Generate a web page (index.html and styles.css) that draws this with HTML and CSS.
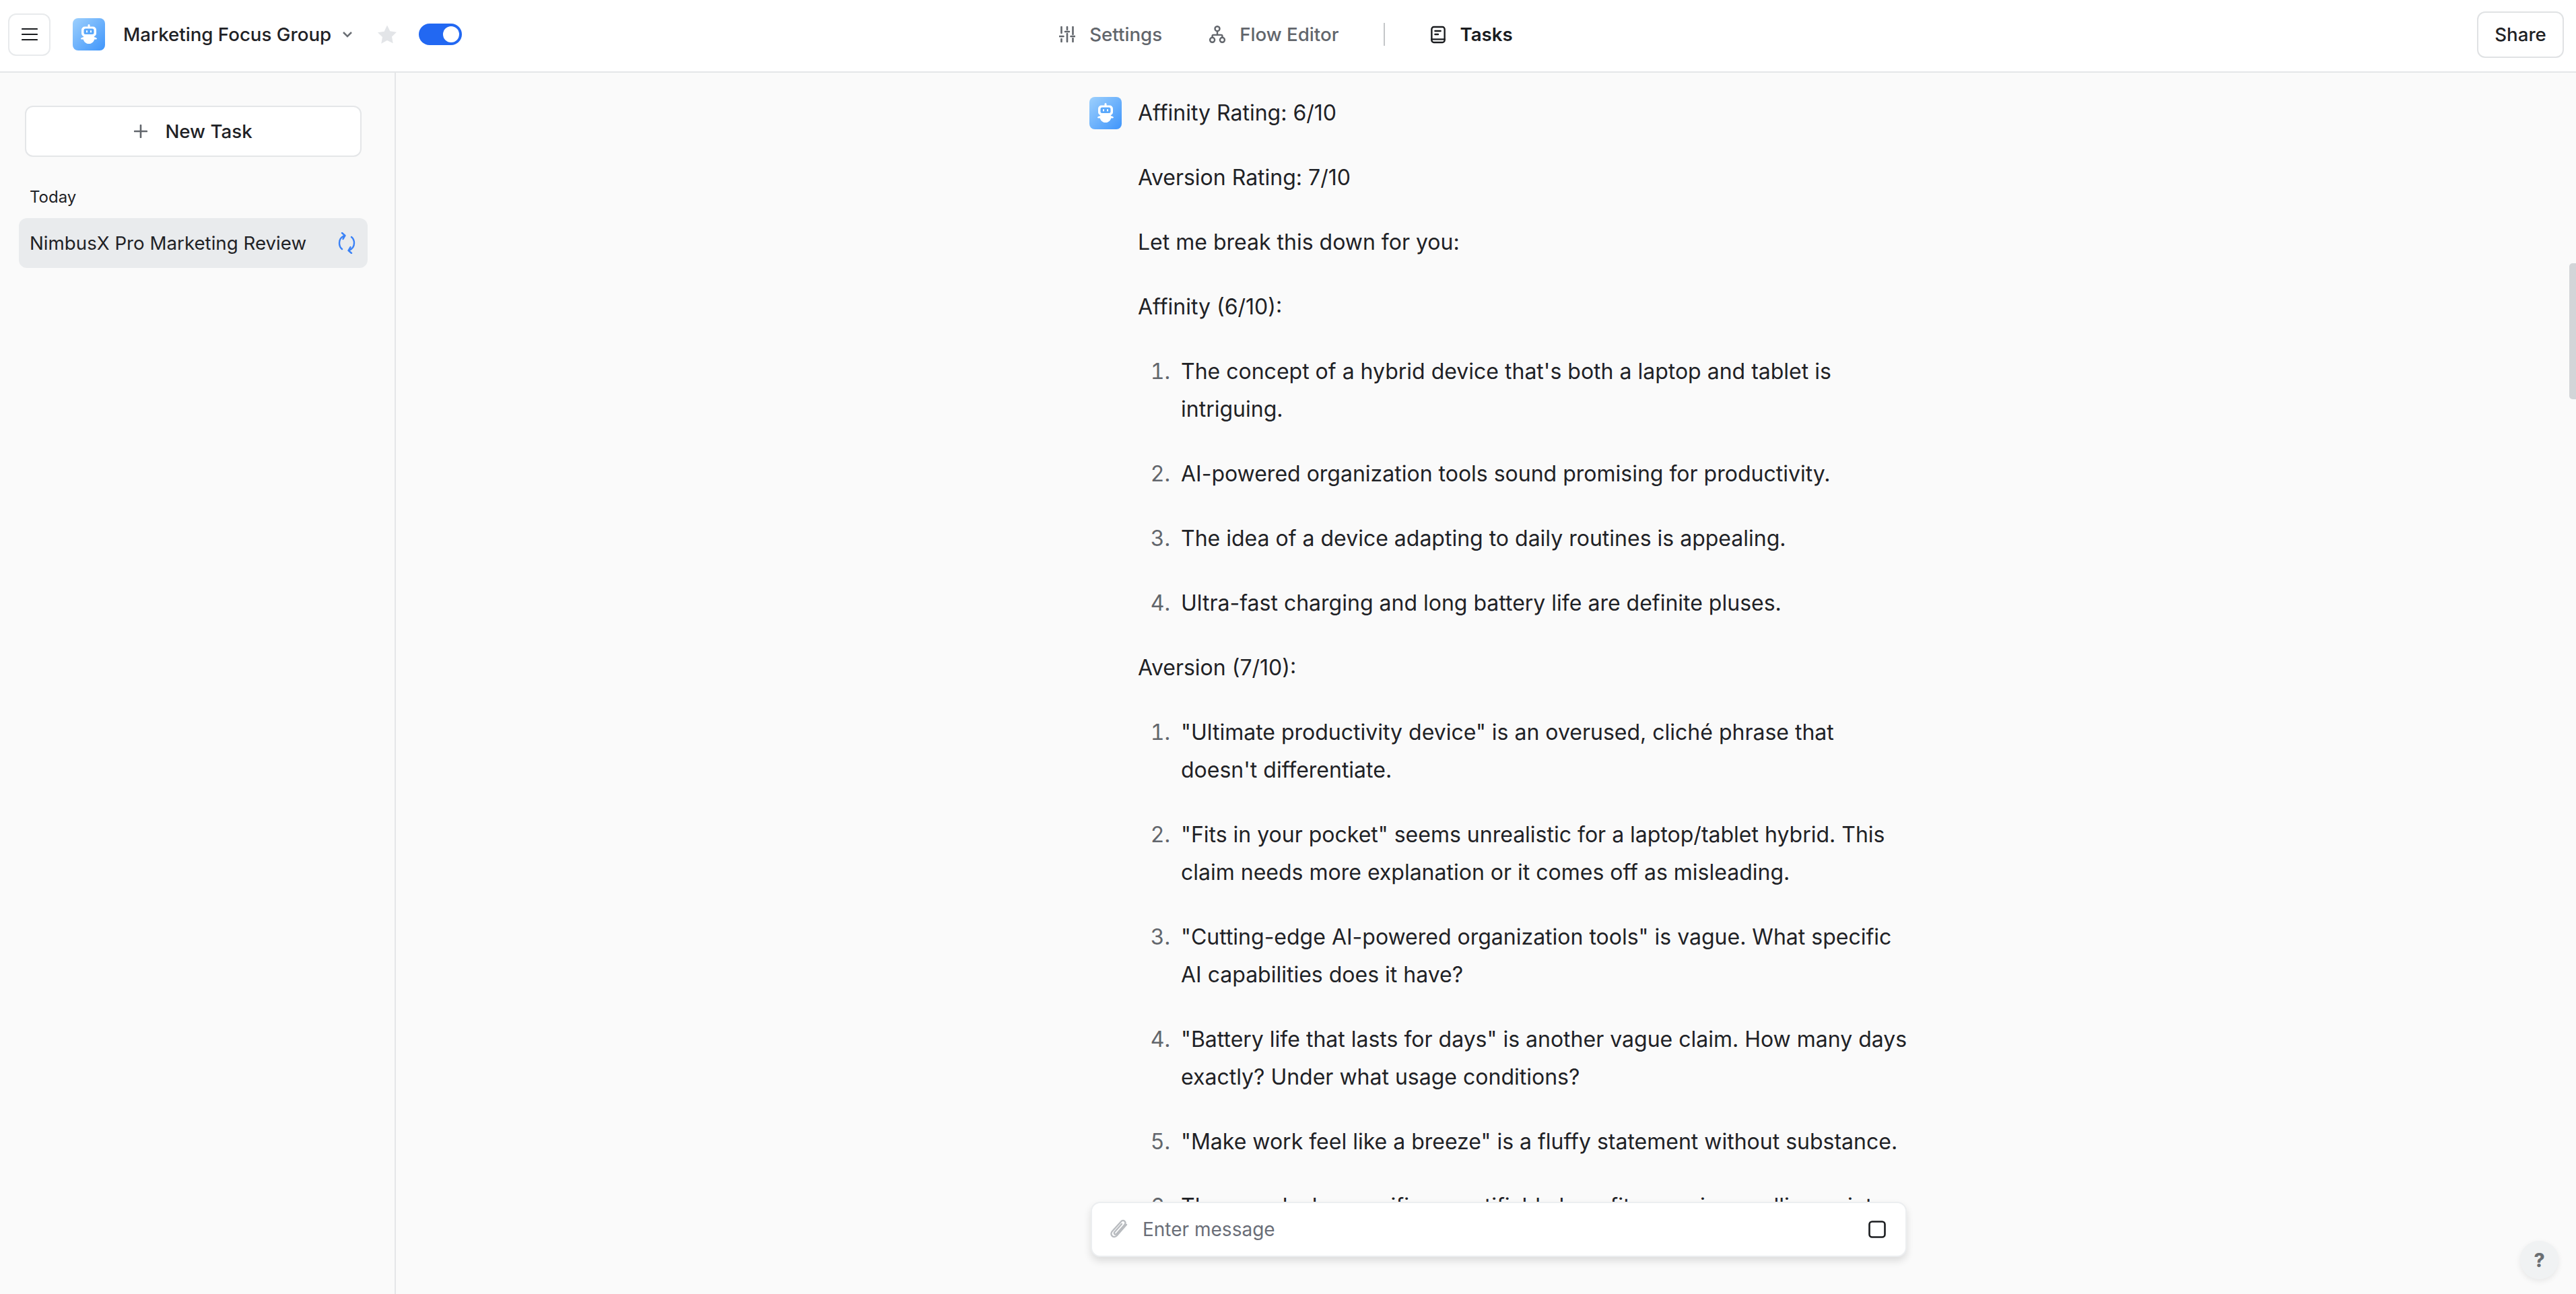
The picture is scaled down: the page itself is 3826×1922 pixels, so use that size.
FILE: index.html
```html
<!DOCTYPE html>
<html lang="en">
<head>
<meta charset="utf-8">
<title>Marketing Focus Group</title>
<link rel="stylesheet" href="styles.css">
</head>
<body>
<svg class="defs" width="0" height="0" aria-hidden="true">
  <defs>
    <linearGradient id="lg" x1="0" y1="0" x2="1" y2="1">
      <stop offset="0" stop-color="#9dd0fd"/>
      <stop offset="1" stop-color="#3f95fb"/>
    </linearGradient>
    <symbol id="bot" viewBox="0 0 48 48">
      <rect width="48" height="48" rx="8" fill="url(#lg)"/>
      <rect x="22.500" y="9" width="3" height="5" rx="1.500" fill="#fff"/>
      <path d="M17 27h14c.6 0 1 .6 1.200 1.200 1.500.3 3.800 1 3.800 2.300 0 1.100-2.200 1.300-3.700.9C31 35.500 28 38 24 38s-7-2.500-8.300-6.600c-1.500.4-3.700.2-3.700-.9 0-1.300 2.300-2 3.800-2.300.2-.6.6-1.200 1.200-1.200z" fill="#fff"/>
      <rect x="13" y="12.500" width="22" height="15" rx="5" fill="#fff"/>
      <rect x="16.500" y="15.500" width="15" height="8.500" rx="2.500" fill="#5aa8fb"/>
      <rect x="20" y="18" width="2" height="3.500" rx="1" fill="#fff"/>
      <rect x="26" y="18" width="2" height="3.500" rx="1" fill="#fff"/>
    </symbol>
  </defs>
</svg>
<div class="app">
  <header class="topbar">
    <div class="left">
      <button class="menu-btn" aria-label="Menu">
        <svg width="24" height="24" viewBox="0 0 24 24" class="stroke-dark thin"><path d="M1 4h22M1 12h22M1 20h22"/></svg>
      </button>
      <svg class="logo"><use href="#bot"/></svg>
      <span class="title">Marketing Focus Group</span>
      <svg class="chevron" width="16" height="10" viewBox="0 0 16 10"><path d="M2 2l6 6 6-6"/></svg>
      <svg class="star" width="30" height="28" viewBox="0 0 30 28"><path d="M15 .5l4.300 8.800 9.700 1.400-7 6.800 1.700 9.700L15 23.100l-8.700 4.600L8 18 1 11.200l9.700-1.400z"/></svg>
      <span class="toggle"><span class="knob"></span></span>
    </div>
    <nav class="nav">
      <span class="tab">
        <svg width="24" height="24" viewBox="0 0 24 24" class="stroke-grey"><path d="M3.500 1v9M12 1v4M20.500 1v11M3.500 19v4M12 11v12M20.500 18v5M.5 15h6M9 8h6M17.500 15h6"/></svg>
        Settings
      </span>
      <span class="tab tab-flow">
        <svg width="24" height="26" viewBox="0 0 26 28" class="stroke-grey"><circle cx="13" cy="5" r="3.800"/><circle cx="5" cy="23" r="3.800"/><circle cx="21" cy="23" r="3.800"/><path d="M13 9v6M5 19v-2.500a1.500 1.500 0 0 1 1.500-1.500h13a1.500 1.500 0 0 1 1.500 1.500V19"/></svg>
        Flow Editor
      </span>
      <span class="nav-div"></span>
      <span class="tab tab-active">
        <svg width="22" height="27" viewBox="0 0 24 28" class="stroke-dark"><rect x="1.500" y="1.500" width="21" height="25" rx="3.500"/><path d="M1.500 21.500h21M7 8h9M7 13.500h5"/></svg>
        Tasks
      </span>
    </nav>
    <div class="right">
      <button class="share">Share</button>
    </div>
  </header>
  <div class="body">
    <aside class="sidebar">
      <button class="new-task">
        <svg width="20" height="20" viewBox="0 0 20 20" class="stroke-grey"><path d="M10 1v18M1 10h18"/></svg>
        New Task
      </button>
      <div class="group-label">Today</div>
      <div class="task-row">
        <span class="task-name">NimbusX Pro Marketing Review</span>
        <svg width="26" height="32" viewBox="0 0 26 32" class="stroke-blue"><path d="M10 5C4.500 7 2 11 2 16c0 4 1.500 7 4 9M6 1l4.500 4-3 5M16 27c5.500-2 8-6 8-11 0-4-1.500-7-4-9M20 31l-4.500-4 3-5"/></svg>
      </div>
    </aside>
    <main class="main">
      <div class="thread">
        <svg class="avatar"><use href="#bot"/></svg>
        <div class="message">
          <p>Affinity Rating: 6/10</p>
          <p>Aversion Rating: 7/10</p>
          <p>Let me break this down for you:</p>
          <p>Affinity (6/10):</p>
          <ol>
            <li>The concept of a hybrid device that's both a laptop and tablet is intriguing.</li>
            <li>AI-powered organization tools sound promising for productivity.</li>
            <li>The idea of a device adapting to daily routines is appealing.</li>
            <li>Ultra-fast charging and long battery life are definite pluses.</li>
          </ol>
          <p>Aversion (7/10):</p>
          <ol>
            <li>"Ultimate productivity device" is an overused, cliché phrase that doesn't differentiate.</li>
            <li>"Fits in your pocket" seems unrealistic for a laptop/tablet hybrid. This claim needs more explanation or it comes off as misleading.</li>
            <li>"Cutting-edge AI-powered organization tools" is vague. What specific AI capabilities does it have?</li>
            <li>"Battery life that lasts for days" is another vague claim. How many days exactly? Under what usage conditions?</li>
            <li>"Make work feel like a breeze" is a fluffy statement without substance.</li>
            <li>The copy lacks specific, quantifiable benefits or unique selling points.</li>
          </ol>
        </div>
      </div>
      <div class="composer">
        <svg width="28" height="32" viewBox="0 0 28 32" class="clip"><path d="M25 9L11 25c-2 2.300-5 2.600-7 1s-2.200-4.800-.2-7L17 4.500c1.500-1.700 3.800-2 5.300-.7s1.600 3.500.1 5.200L10.500 22.500c-.9 1-2.200 1.200-3 .5s-.8-2-.1-3L18 8"/></svg>
        <span class="placeholder">Enter message</span>
        <svg width="26" height="26" viewBox="0 0 26 26" class="stroke-dark stop"><rect x="1.500" y="1.500" width="23" height="23" rx="4"/></svg>
      </div>
      <div class="scroll-thumb"></div>
      <div class="help">?</div>
    </main>
  </div>
</div>
</body>
</html>
```
FILE: styles.css
```css
* { box-sizing: border-box; }
html, body { margin: 0; height: 100%; overflow: hidden; }
body { font-family: Inter, "Liberation Sans", sans-serif; color: #1f2226; background: #fafafa; }
.defs { position: absolute; }
button { font: inherit; color: inherit; background: #fff; cursor: pointer; }
svg { display: block; flex: none; fill: none; }
.stroke-dark { stroke: #1a1c1f; stroke-width: 2.600; stroke-linecap: round; stroke-linejoin: round; }
.stroke-dark.thin { stroke-width: 2.200; }
.stroke-grey { stroke: #62666c; stroke-width: 2.600; stroke-linecap: round; stroke-linejoin: round; }
.stroke-blue { stroke: #3b82f6; stroke-width: 2.400; stroke-linecap: round; stroke-linejoin: round; }

.app { height: 1922px; display: flex; flex-direction: column; }
.topbar { height: 108px; flex: none; background: #fff; border-bottom: 2px solid #e4e6e8; display: grid; grid-template-columns: 1fr auto 1fr; align-items: center; padding: 0 18px 4px 12px; }
.left { display: flex; align-items: center; }
.menu-btn { width: 63px; height: 63px; border: 2px solid #e8eaec; border-radius: 12px; padding: 0; display: flex; align-items: center; justify-content: center; }
.logo { width: 48px; height: 48px; margin-left: 33px; }
.title { font-size: 27.700px; font-weight: 500; margin-left: 27px; }
.chevron { margin-left: 16px; stroke: #6b6f75; stroke-width: 2.500; }
.star { margin-left: 36px; fill: #e3e5e8; }
.toggle { width: 64px; height: 32px; margin-left: 32px; border-radius: 16px; background: #2268f2; position: relative; display: flex; align-items: center; justify-content: flex-end; padding-right: 4px; }
.knob { width: 24px; height: 24px; border-radius: 50%; background: #fff; }

.nav { display: flex; align-items: center; font-size: 27.700px; font-weight: 500; }
.tab { display: flex; align-items: center; gap: 21px; color: #62666c; }
.tab-flow { margin-left: 70px; }
.nav-div { width: 2px; height: 34px; background: #c4c6c9; margin: 0 68px 0 67px; }
.tab-active { color: #1a1c1f; font-weight: 600; }
.right { display: flex; justify-content: flex-end; }
.share { width: 129px; height: 69px; border: 2px solid #e0e2e4; border-radius: 12px; font-size: 27.700px; font-weight: 500; padding: 0; }

.body { flex: 1; display: flex; min-height: 0; }
.sidebar { width: 588px; flex: none; border-right: 2px solid #e4e6e8; padding: 49px 0 0 28px; }
.new-task { width: 500px; height: 76px; margin-left: 9px; border: 2px solid #e4e6e8; border-radius: 12px; display: flex; align-items: center; justify-content: center; gap: 26px; font-size: 27.700px; font-weight: 500; }
.group-label { font-size: 24px; font-weight: 400; margin: 44px 0 0 16px; line-height: 32px; }
.task-row { width: 518px; height: 74px; margin-top: 15px; background: #e9ebed; border-radius: 12px; padding: 0 18px 0 16px; display: flex; align-items: center; justify-content: space-between; font-size: 27.700px; }

.main { flex: 1; position: relative; overflow: hidden; min-width: 0; }
.thread { width: 1226px; margin-left: 1030px; padding-top: 36px; display: flex; gap: 24px; }
.avatar { width: 48px; height: 48px; }
.message { width: 1154px; font-size: 32px; line-height: 56px; margin-top: -4px; }
.message p { margin: 0 0 40px; }
.message ol { margin: 0 0 40px; padding-left: 64px; }
.message li { margin-bottom: 40px; }
.message li::marker { color: #62666c; content: counter(list-item) ".\2002"; }
.message li:last-child { margin-bottom: 0; }

.composer { position: absolute; left: 1032px; top: 1677px; width: 1212px; height: 82px; background: #fff; border: 2px solid #eceef0; border-radius: 14px; box-shadow: 0 6px 12px rgba(0,0,0,.12); display: flex; align-items: center; padding: 0 29px 0 26px; }
.clip { stroke: #b9bcc0; stroke-width: 2.400; stroke-linecap: round; stroke-linejoin: round; }
.placeholder { flex: 1; margin-left: 21px; font-size: 28px; color: #6a6e78; }
.scroll-thumb { position: absolute; right: 0; top: 283px; width: 10px; height: 202px; background: #d2d5d8; border-radius: 5px 0 0 5px; }
.help { position: absolute; left: 3155px; top: 1735px; width: 57px; height: 57px; border-radius: 50%; background: #f0f2f3; box-shadow: 0 3px 8px rgba(0,0,0,.08); color: #6b6f73; font-size: 28px; font-weight: 800; display: flex; align-items: center; justify-content: center; }
```
